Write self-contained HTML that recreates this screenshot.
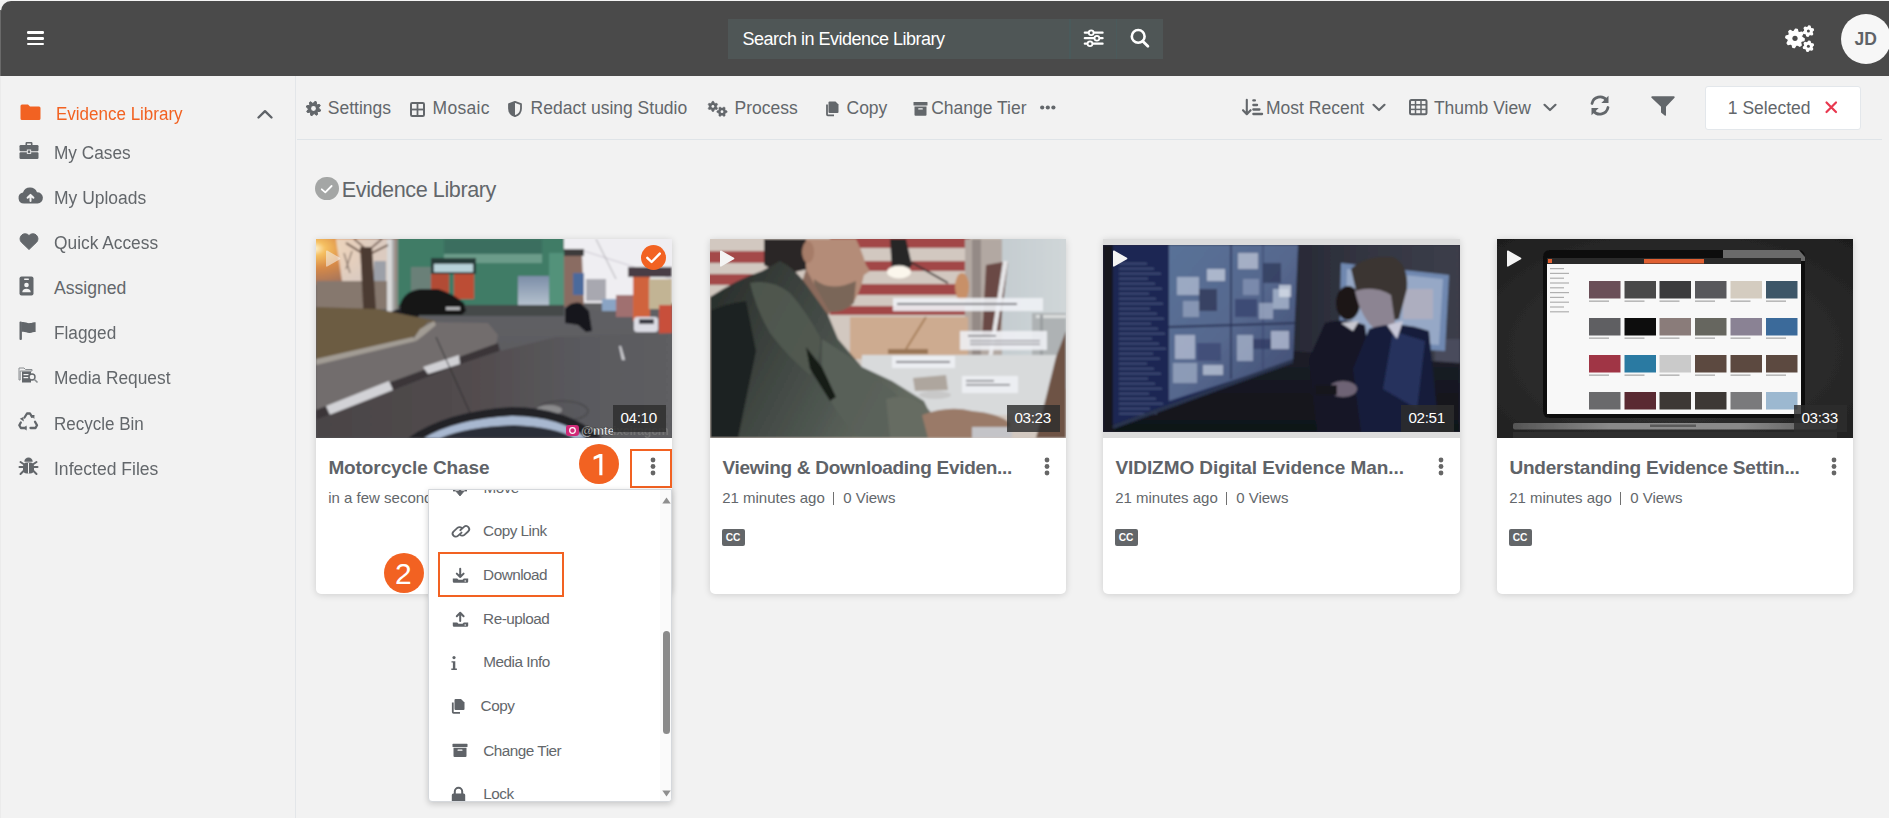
<!DOCTYPE html>
<html><head><meta charset="utf-8"><title>Evidence Library</title><style>
html,body{margin:0;padding:0;}
body{width:1889px;height:818px;position:relative;overflow:hidden;background:#f2f2f2;font-family:"Liberation Sans",sans-serif;}
.a{position:absolute;}
.t{position:absolute;white-space:nowrap;line-height:normal;}
svg.a{overflow:visible;}
</style></head><body>
<div class="a" style="left:0;top:0;width:1889px;height:1px;background:#f5f5f5"></div><div class="a" style="left:1px;top:1px;width:1888px;height:75px;background:#4a4a4a;border-top-left-radius:10px;"></div>
<div class="a" style="left:0px;top:10px;width:1px;height:66px;background:#6a6a6a;"></div>
<div class="a" style="left:27px;top:31.2px;width:17px;height:2.4px;background:#fff;border-radius:1.2px;"></div>
<div class="a" style="left:27px;top:37.199999999999996px;width:17px;height:2.4px;background:#fff;border-radius:1.2px;"></div>
<div class="a" style="left:27px;top:42.699999999999996px;width:17px;height:2.4px;background:#fff;border-radius:1.2px;"></div>
<div class="a" style="left:728px;top:19px;width:435px;height:40px;background:#4f5656;"></div>
<div class="a" style="left:1069px;top:19px;width:2px;height:40px;background:#4a5a5b;"></div>
<div class="a" style="left:1116px;top:19px;width:1px;height:40px;background:#4a5a5b;"></div>
<div class="t" style="left:742.50px;top:28.71px;font-size:18px;font-weight:normal;color:#ffffff;letter-spacing:-0.5px;">Search in Evidence Library</div>
<svg class="a" style="left:1080px;top:19px;" width="30" height="40" viewBox="0 0 30 40" ><line x1="4.7999999999999545" y1="13.700000000000003" x2="22.59999999999991" y2="13.700000000000003" stroke="#fff" stroke-width="2.2" stroke-linecap="round"/><circle cx="11.200000000000045" cy="13.700000000000003" r="2.4" fill="#4f5656" stroke="#fff" stroke-width="1.8"/><line x1="4.7999999999999545" y1="19.200000000000003" x2="22.59999999999991" y2="19.200000000000003" stroke="#fff" stroke-width="2.2" stroke-linecap="round"/><circle cx="16.90000000000009" cy="19.200000000000003" r="2.4" fill="#4f5656" stroke="#fff" stroke-width="1.8"/><line x1="4.7999999999999545" y1="24.700000000000003" x2="22.59999999999991" y2="24.700000000000003" stroke="#fff" stroke-width="2.2" stroke-linecap="round"/><circle cx="10.0" cy="24.700000000000003" r="2.4" fill="#4f5656" stroke="#fff" stroke-width="1.8"/></svg>
<svg class="a" style="left:1130px;top:29px;" width="22" height="22" viewBox="0 0 22 22" ><circle cx="8.2" cy="7.4" r="6.4" fill="none" stroke="#fff" stroke-width="2.6"/><line x1="12.8" y1="12.2" x2="17.9" y2="17.3" stroke="#fff" stroke-width="2.8" stroke-linecap="round"/></svg>
<svg class="a" style="left:1785px;top:25px;" width="30" height="28" viewBox="0 0 30 28" ><polygon points="10.46,4.01 12.26,4.28 12.99,6.97 14.17,7.68 16.89,7.05 17.98,8.52 16.59,10.94 16.92,12.27 19.29,13.76 19.02,15.56 16.33,16.29 15.62,17.47 16.25,20.19 14.78,21.28 12.36,19.89 11.03,20.22 9.54,22.59 7.74,22.32 7.01,19.63 5.83,18.92 3.11,19.55 2.02,18.08 3.41,15.66 3.08,14.33 0.71,12.84 0.98,11.04 3.67,10.31 4.38,9.13 3.75,6.41 5.22,5.32 7.64,6.71 8.97,6.38" fill="#fff" stroke="#fff" stroke-width="1.2" stroke-linejoin="round"/><circle cx="10" cy="13.3" r="2.6" fill="#4a4a4a"/><polygon points="23.74,0.91 25.07,1.18 25.51,2.94 26.26,3.59 28.06,3.80 28.50,5.09 27.19,6.35 27.00,7.32 27.72,8.99 26.83,10.01 25.08,9.51 24.14,9.83 23.06,11.29 21.73,11.02 21.29,9.26 20.54,8.61 18.74,8.40 18.30,7.11 19.61,5.85 19.80,4.88 19.08,3.21 19.97,2.19 21.72,2.69 22.66,2.37" fill="#fff" stroke="#fff" stroke-width="1.2" stroke-linejoin="round"/><circle cx="23.4" cy="6.1" r="1.5" fill="#4a4a4a"/><polygon points="23.74,16.01 25.07,16.28 25.51,18.04 26.26,18.69 28.06,18.90 28.50,20.19 27.19,21.45 27.00,22.42 27.72,24.09 26.83,25.11 25.08,24.61 24.14,24.93 23.06,26.39 21.73,26.12 21.29,24.36 20.54,23.71 18.74,23.50 18.30,22.21 19.61,20.95 19.80,19.98 19.08,18.31 19.97,17.29 21.72,17.79 22.66,17.47" fill="#fff" stroke="#fff" stroke-width="1.2" stroke-linejoin="round"/><circle cx="23.4" cy="21.2" r="1.5" fill="#4a4a4a"/></svg>
<div class="a" style="left:1841px;top:14px;width:50px;height:50px;background:#f7f7f7;border-radius:50%;"></div>
<div class="t" style="left:1854.50px;top:29.16px;font-size:17.5px;font-weight:bold;color:#5f6368;">JD</div>
<div class="a" style="left:295px;top:76px;width:1px;height:742px;background:#e3e6e9;"></div>
<div class="a" style="left:0px;top:76px;width:1px;height:742px;background:#ebebeb;"></div>
<div class="t" style="left:56.00px;top:104.07px;font-size:17.6px;font-weight:normal;color:#f26222;transform:scaleX(0.966);transform-origin:0 0;">Evidence Library</div>
<div class="t" style="left:54.00px;top:142.77px;font-size:17.6px;font-weight:normal;color:#63676b;transform:scaleX(0.98);transform-origin:0 0;">My Cases</div>
<div class="t" style="left:54.00px;top:187.77px;font-size:17.6px;font-weight:normal;color:#63676b;transform:scaleX(0.993);transform-origin:0 0;">My Uploads</div>
<div class="t" style="left:54.00px;top:233.07px;font-size:17.6px;font-weight:normal;color:#63676b;transform:scaleX(0.986);transform-origin:0 0;">Quick Access</div>
<div class="t" style="left:54.00px;top:278.07px;font-size:17.6px;font-weight:normal;color:#63676b;transform:scaleX(1.0);transform-origin:0 0;">Assigned</div>
<div class="t" style="left:54.00px;top:323.07px;font-size:17.6px;font-weight:normal;color:#63676b;transform:scaleX(0.979);transform-origin:0 0;">Flagged</div>
<div class="t" style="left:54.00px;top:368.07px;font-size:17.6px;font-weight:normal;color:#63676b;transform:scaleX(0.984);transform-origin:0 0;">Media Request</div>
<div class="t" style="left:54.00px;top:413.57px;font-size:17.6px;font-weight:normal;color:#63676b;transform:scaleX(0.967);transform-origin:0 0;">Recycle Bin</div>
<div class="t" style="left:54.00px;top:458.57px;font-size:17.6px;font-weight:normal;color:#63676b;transform:scaleX(0.997);transform-origin:0 0;">Infected Files</div>
<svg class="a" style="left:20px;top:103px;" width="21" height="18" viewBox="0 0 21 18" ><path d="M2 1.5h6l2 2h9a1.5 1.5 0 0 1 1.5 1.5v10.5a1.5 1.5 0 0 1-1.5 1.5H2A1.5 1.5 0 0 1 .5 15.5V3A1.5 1.5 0 0 1 2 1.5z" fill="#f26222"/></svg>
<svg class="a" style="left:256px;top:108px;" width="18" height="12" viewBox="0 0 18 12" ><polyline points="2.5,9.5 9,3.2 15.5,9.5" fill="none" stroke="#5f6368" stroke-width="2.4" stroke-linecap="round" stroke-linejoin="round"/></svg>
<svg class="a" style="left:18.5px;top:141px;" width="20" height="19" viewBox="0 0 20 19" ><path d="M6.5 4V2.2A1.2 1.2 0 0 1 7.7 1h4.6a1.2 1.2 0 0 1 1.2 1.2V4h-1.6V2.6H8.1V4z" fill="#63676b"/><rect x="0.5" y="4" width="19" height="6.2" rx="1.2" fill="#63676b"/><rect x="0.5" y="11.2" width="19" height="6.8" rx="1.2" fill="#63676b"/><rect x="8.3" y="9" width="3.4" height="3.4" fill="#63676b" stroke="#f2f2f2" stroke-width="0.9"/></svg>
<svg class="a" style="left:18px;top:187px;" width="25" height="17" viewBox="0 0 25 17" ><path d="M6 16.5A5.5 5.5 0 0 1 5 5.6 7.5 7.5 0 0 1 19 5.2 5.6 5.6 0 0 1 19.5 16.5z" fill="#63676b"/><path d="M12.5 14V8.2M9.6 10.8l2.9-2.9 2.9 2.9" stroke="#f2f2f2" stroke-width="2" fill="none" stroke-linecap="round" stroke-linejoin="round"/></svg>
<svg class="a" style="left:18.5px;top:232.5px;" width="20" height="17" viewBox="0 0 20 17" ><path d="M10 16.5L2.2 9A4.9 4.9 0 0 1 10 2.6 4.9 4.9 0 0 1 17.8 9z" fill="#63676b" stroke="#63676b" stroke-width="1" stroke-linejoin="round"/></svg>
<svg class="a" style="left:18.5px;top:275.5px;" width="15" height="20" viewBox="0 0 15 20" ><rect x="0.5" y="0.5" width="14" height="19" rx="2" fill="#63676b"/><rect x="5" y="2.5" width="5" height="1.4" rx=".7" fill="#f2f2f2"/><circle cx="7.5" cy="9" r="2.3" fill="#f2f2f2"/><path d="M3.3 16.3a4.2 3.6 0 0 1 8.4 0z" fill="#f2f2f2"/></svg>
<svg class="a" style="left:18.5px;top:321px;" width="18" height="19" viewBox="0 0 18 19" ><rect x="0.5" y="0.5" width="2.4" height="18.5" rx="1" fill="#63676b"/><path d="M2.5 1.3c3-1 5.5 1.2 8.5.8 2-.2 3.6-.9 5.6-.9V11c-2 0-3.6.7-5.6.9-3 .4-5.5-1.8-8.5-.8z" fill="#63676b"/></svg>
<svg class="a" style="left:18px;top:365px;" width="21" height="20" viewBox="0 0 21 20" ><path d="M1 3h5l1.5 1.5H14V6H2.2v9H1z" fill="none" stroke="#8a8e91" stroke-width="1"/><rect x="4" y="6.5" width="9" height="11" fill="#63676b"/><rect x="5.5" y="9" width="5" height="1.2" fill="#f2f2f2"/><rect x="5.5" y="12" width="5" height="1.2" fill="#f2f2f2"/><circle cx="14" cy="12" r="3" fill="#f2f2f2" stroke="#63676b" stroke-width="1.4"/><line x1="16.2" y1="14.2" x2="19.5" y2="17.5" stroke="#8a8e91" stroke-width="1.6"/></svg>
<svg class="a" style="left:18px;top:411px;" width="21" height="20" viewBox="0 0 21 20" ><g fill="none" stroke="#63676b" stroke-width="2.3" stroke-linecap="round" stroke-linejoin="round"><path d="M6.5 6.5L9 2.5h3l2 3.3"/><path d="M2.8 11.5l-1.5 2.7 1.6 2.8h4.5"/><path d="M12.5 17h5l1.5-2.7-2-3.6"/></g><g fill="#63676b"><path d="M12.8 4l3.7 0-.2 4z"/><path d="M8.6 14.5v5l-3.4-2.5z"/><path d="M1.8 7.8l3.5-1.8.5 4.4z"/></g></svg>
<svg class="a" style="left:18px;top:456px;" width="21" height="20" viewBox="0 0 21 20" ><g fill="#63676b"><path d="M6.3 5.8a4.2 4.2 0 0 1 8.4 0z"/><rect x="5" y="6.6" width="11" height="11" rx="4"/></g><g stroke="#63676b" stroke-width="2" stroke-linecap="round"><line x1="1.5" y1="11" x2="19.5" y2="11"/><line x1="2.5" y1="6" x2="5.5" y2="8"/><line x1="18.5" y1="6" x2="15.5" y2="8"/><line x1="2.5" y1="18" x2="5.5" y2="15"/><line x1="18.5" y1="18" x2="15.5" y2="15"/></g><line x1="10.5" y1="7" x2="10.5" y2="17.5" stroke="#f2f2f2" stroke-width="1"/></svg>
<div class="a" style="left:297px;top:139px;width:1585px;height:1px;background:#dfe4e8;"></div>
<div class="t" style="left:327.80px;top:97.66px;font-size:17.5px;font-weight:normal;color:#63676b;">Settings</div>
<div class="t" style="left:432.60px;top:97.66px;font-size:17.5px;font-weight:normal;color:#63676b;letter-spacing:0.3px;">Mosaic</div>
<div class="t" style="left:530.60px;top:97.66px;font-size:17.5px;font-weight:normal;color:#63676b;">Redact using Studio</div>
<div class="t" style="left:734.50px;top:97.66px;font-size:17.5px;font-weight:normal;color:#63676b;">Process</div>
<div class="t" style="left:846.50px;top:97.66px;font-size:17.5px;font-weight:normal;color:#63676b;">Copy</div>
<div class="t" style="left:931.20px;top:97.66px;font-size:17.5px;font-weight:normal;color:#63676b;">Change Tier</div>
<svg class="a" style="left:305.5px;top:101px;" width="15" height="15" viewBox="0 0 15 15" ><polygon points="8.92,0.34 10.29,0.76 10.50,3.01 11.32,3.68 13.57,3.44 14.24,4.71 12.80,6.45 12.90,7.50 14.66,8.92 14.24,10.29 11.99,10.50 11.32,11.32 11.56,13.57 10.29,14.24 8.55,12.80 7.50,12.90 6.08,14.66 4.71,14.24 4.50,11.99 3.68,11.32 1.43,11.56 0.76,10.29 2.20,8.55 2.10,7.50 0.34,6.08 0.76,4.71 3.01,4.50 3.68,3.68 3.44,1.43 4.71,0.76 6.45,2.20 7.50,2.10" fill="#63676b" stroke="#63676b" stroke-width="1" stroke-linejoin="round"/><circle cx="7.5" cy="7.5" r="2.4" fill="#f2f2f2"/></svg>
<svg class="a" style="left:410px;top:101.5px;" width="15" height="15" viewBox="0 0 15 15" ><rect x="1" y="1" width="13" height="13" rx="1.2" fill="none" stroke="#63676b" stroke-width="2"/><line x1="7.5" y1="1" x2="7.5" y2="14" stroke="#63676b" stroke-width="1.8"/><line x1="1" y1="7.5" x2="14" y2="7.5" stroke="#63676b" stroke-width="1.8"/></svg>
<svg class="a" style="left:508px;top:100.5px;" width="14" height="16" viewBox="0 0 14 16" ><path d="M7 .8L1 3.2v4.2c0 3.8 2.6 6.6 6 7.8 3.4-1.2 6-4 6-7.8V3.2z" fill="none" stroke="#63676b" stroke-width="1.8" stroke-linejoin="round"/><path d="M7 .8v14.4c-3.4-1.2-6-4-6-7.8V3.2z" fill="#63676b"/></svg>
<svg class="a" style="left:708px;top:99.5px;" width="20" height="19" viewBox="0 0 20 19" ><polygon points="4.23,1.34 5.57,1.34 6.32,2.98 7.15,3.46 8.95,3.30 9.61,4.45 8.57,5.92 8.57,6.88 9.61,8.35 8.95,9.50 7.15,9.34 6.32,9.82 5.57,11.46 4.23,11.46 3.48,9.82 2.65,9.34 0.85,9.50 0.19,8.35 1.23,6.88 1.23,5.92 0.19,4.45 0.85,3.30 2.65,3.46 3.48,2.98" fill="#63676b" stroke="#63676b" stroke-width="0.6" stroke-linejoin="round"/><circle cx="4.9" cy="6.4" r="1.4" fill="#f2f2f2"/><polygon points="15.95,6.99 17.10,7.65 16.94,9.45 17.42,10.28 19.06,11.03 19.06,12.37 17.42,13.12 16.94,13.95 17.10,15.75 15.95,16.41 14.48,15.37 13.52,15.37 12.05,16.41 10.90,15.75 11.06,13.95 10.58,13.12 8.94,12.37 8.94,11.03 10.58,10.28 11.06,9.45 10.90,7.65 12.05,6.99 13.52,8.03 14.48,8.03" fill="#63676b" stroke="#63676b" stroke-width="0.6" stroke-linejoin="round"/><circle cx="14" cy="11.7" r="1.4" fill="#f2f2f2"/></svg>
<svg class="a" style="left:825px;top:100px;" width="15" height="17" viewBox="0 0 15 17" ><path d="M4.5 1.5h6l3 3V12a1 1 0 0 1-1 1h-8a1 1 0 0 1-1-1V2.5a1 1 0 0 1 1-1z" fill="#63676b"/><path d="M2 4.5v10a.8.8 0 0 0 .8.8H9" fill="none" stroke="#63676b" stroke-width="1.8"/></svg>
<svg class="a" style="left:913px;top:100.5px;" width="15" height="16" viewBox="0 0 15 16" ><rect x="0.5" y="1" width="14" height="3.6" rx=".6" fill="#63676b"/><path d="M1.5 5.6h12v8.2a1 1 0 0 1-1 1h-10a1 1 0 0 1-1-1z" fill="#63676b"/><rect x="5.2" y="7.2" width="4.6" height="1.3" rx=".5" fill="#f2f2f2"/></svg>
<svg class="a" style="left:1039.5px;top:104.5px;" width="16" height="5" viewBox="0 0 16 5" ><circle cx="2.2" cy="2.5" r="2.1" fill="#63676b"/><circle cx="7.8" cy="2.5" r="2.1" fill="#63676b"/><circle cx="13.4" cy="2.5" r="2.1" fill="#63676b"/></svg>
<svg class="a" style="left:1242px;top:99px;" width="22" height="17" viewBox="0 0 22 17" ><path d="M4.8 0.8v14M1 11.2l3.8 4 3.8-4" fill="none" stroke="#63676b" stroke-width="2.1" stroke-linecap="round" stroke-linejoin="round"/><rect x="10.2" y="0.25" width="3.8" height="2.3" rx="1.1" fill="#63676b"/><rect x="10.2" y="4.85" width="6.0" height="2.3" rx="1.1" fill="#63676b"/><rect x="10.2" y="9.35" width="8.4" height="2.3" rx="1.1" fill="#63676b"/><rect x="10.2" y="13.85" width="11.0" height="2.3" rx="1.1" fill="#63676b"/></svg>
<div class="t" style="left:1266.00px;top:97.66px;font-size:17.5px;font-weight:normal;color:#63676b;">Most Recent</div>
<svg class="a" style="left:1371.5px;top:102.5px;" width="14" height="9" viewBox="0 0 14 9" ><polyline points="1.5,1.8 7,7 12.5,1.8" fill="none" stroke="#63676b" stroke-width="2.2" stroke-linecap="round" stroke-linejoin="round"/></svg>
<svg class="a" style="left:1408.5px;top:99.2px;" width="19" height="16.5" viewBox="0 0 19 16.5" ><rect x="1" y="1" width="16.5" height="14.2" rx="1.5" fill="none" stroke="#63676b" stroke-width="2"/><line x1="6.5" y1="1" x2="6.5" y2="15" stroke="#63676b" stroke-width="1.5"/><line x1="12" y1="1" x2="12" y2="15" stroke="#63676b" stroke-width="1.5"/><line x1="1" y1="5.8" x2="17.5" y2="5.8" stroke="#63676b" stroke-width="1.5"/><line x1="1" y1="10.4" x2="17.5" y2="10.4" stroke="#63676b" stroke-width="1.5"/></svg>
<div class="t" style="left:1433.90px;top:97.66px;font-size:17.5px;font-weight:normal;color:#63676b;">Thumb View</div>
<svg class="a" style="left:1543px;top:102.5px;" width="14" height="9" viewBox="0 0 14 9" ><polyline points="1.5,1.8 7,7 12.5,1.8" fill="none" stroke="#63676b" stroke-width="2.2" stroke-linecap="round" stroke-linejoin="round"/></svg>
<svg class="a" style="left:1589px;top:95px;" width="22" height="21" viewBox="0 0 22 21" ><path d="M3 8.5A8.3 8.3 0 0 1 17.6 5" fill="none" stroke="#63676b" stroke-width="2.8" stroke-linecap="round"/><path d="M19.5 .8v7.2h-7.2z" fill="#63676b"/><path d="M19 12.5A8.3 8.3 0 0 1 4.4 16" fill="none" stroke="#63676b" stroke-width="2.8" stroke-linecap="round"/><path d="M2.5 20.2v-7.2h7.2z" fill="#63676b"/></svg>
<svg class="a" style="left:1650.5px;top:94.5px;" width="24" height="22" viewBox="0 0 24 22" ><path d="M1.2 1.2h21.6a.9.9 0 0 1 .7 1.5L15 11.8v8.2a.8.8 0 0 1-1.3.6l-3.4-2.8a.8.8 0 0 1-.3-.6v-5.4L.5 2.7a.9.9 0 0 1 .7-1.5z" fill="#63676b"/></svg>
<div class="a" style="left:1705px;top:85.5px;width:154px;height:42px;background:#fff;border:1px solid #e3e7eb;border-radius:3px;"></div>
<div class="t" style="left:1727.80px;top:98.36px;font-size:17.5px;font-weight:normal;color:#63676b;">1 Selected</div>
<svg class="a" style="left:1824.5px;top:101px;" width="13" height="13" viewBox="0 0 13 13" ><path d="M1.5 1.5l9.5 9.5M11 1.5l-9.5 9.5" stroke="#e8384f" stroke-width="2.2" stroke-linecap="round"/></svg>
<div class="a" style="left:315.3px;top:176.6px;width:23.5px;height:23.5px;background:#a4a6a5;border-radius:50%;"></div>
<svg class="a" style="left:315.3px;top:176.6px;" width="24" height="24" viewBox="0 0 24 24" ><polyline points="6.8,12.3 10.3,15.4 16.6,9" fill="none" stroke="#fff" stroke-width="1.8" stroke-linecap="round" stroke-linejoin="round"/></svg>
<div class="t" style="left:341.80px;top:177.25px;font-size:21.6px;font-weight:normal;color:#63676b;letter-spacing:-0.42px;">Evidence Library</div>
<div class="a" style="left:316px;top:239px;width:356px;height:355px;background:#fff;border-radius:0 0 5px 5px;box-shadow:0 1px 7px rgba(0,0,0,.15);"></div>
<div class="a" style="left:316px;top:239px;width:356px;height:199px;overflow:hidden;"><svg width="356" height="199" viewBox="0 0 356 199" style="display:block"><defs><filter id="f1" x="-10%" y="-10%" width="120%" height="120%"><feGaussianBlur stdDeviation="1.0"/></filter></defs><rect width="356" height="199" fill="#5a5a5e"/><g filter="url(#f1)"><defs><radialGradient id="sun" cx="0.04" cy="0.3" r="0.75"><stop offset="0" stop-color="#fffbe0"/><stop offset="0.18" stop-color="#f6c060"/><stop offset="0.5" stop-color="#d88a48"/><stop offset="1" stop-color="#9a7060"/></radialGradient><linearGradient id="road1" x1="0" y1="0" x2="0" y2="1"><stop offset="0" stop-color="#66666a"/><stop offset="1" stop-color="#55555a"/></linearGradient><linearGradient id="rl1" x1="0" y1="0" x2="1" y2="0"><stop offset="0" stop-color="#4a4446"/><stop offset="0.45" stop-color="#524c4e"/><stop offset="0.75" stop-color="#5a5a5e"/><stop offset="1" stop-color="#5e5e62"/></linearGradient><linearGradient id="shut1" x1="0" y1="0" x2="0" y2="1"><stop offset="0" stop-color="#7c8ea8"/><stop offset="1" stop-color="#b8c4d0"/></linearGradient></defs><rect x="-10" y="-10" width="376" height="219" fill="url(#road1)"/><rect x="246" y="-6" width="120" height="70" fill="#efeef2"/><line x1="268" y1="12" x2="356" y2="40" stroke="#b0aab8" stroke-width="0.6"/><line x1="280" y1="0" x2="300" y2="40" stroke="#9a9aa0" stroke-width="0.8"/><rect x="270" y="40" width="20" height="22" fill="#a8a8b0"/><rect x="312" y="28" width="44" height="10" fill="#4a3c44"/><rect x="317" y="38" width="17" height="44" fill="#d0643e"/><rect x="333" y="40" width="23" height="30" fill="#c2b494"/><rect x="343" y="66" width="13" height="30" fill="#c8503a"/><rect x="300" y="56" width="17" height="22" fill="#a07070"/><rect x="286" y="60" width="14" height="12" fill="#8aa4c4"/><polygon points="246,10 266,16 268,66 246,68" fill="#8a6c62"/><rect x="246" y="10" width="22" height="7" fill="#3e3a3a"/><rect x="257" y="34" width="11" height="22" fill="#4c6a9c"/><rect x="82" y="-6" width="166" height="82" fill="#3f7b66"/><rect x="95" y="28" width="20" height="24" fill="#6a8078"/><rect x="128" y="0" width="98" height="15" fill="#3a6e5e"/><rect x="128" y="15" width="98" height="9" fill="#6c9c8a"/><rect x="233" y="14" width="15" height="62" fill="#52927a"/><rect x="115" y="19" width="45" height="16" fill="#273a38"/><rect x="118" y="25" width="39" height="8" fill="#b8d2d8"/><rect x="115" y="35" width="18" height="25" fill="#b24c36"/><rect x="138" y="35" width="20" height="25" fill="#bc4e36"/><rect x="202" y="37" width="31" height="31" fill="url(#shut1)"/><rect x="82" y="66" width="166" height="11" fill="#45484a"/><rect x="-6" y="-6" width="88" height="52" fill="url(#sun)"/><polygon points="20,0 72,0 72,42 26,42" fill="#ece2d8" opacity="0.8"/><line x1="28" y1="14" x2="34" y2="34" stroke="#5a4a40" stroke-width="1"/><line x1="36" y1="12" x2="30" y2="30" stroke="#5a4a40" stroke-width="1"/><rect x="58" y="22" width="12" height="20" fill="#9ca0a8"/><rect x="0" y="42" width="82" height="28" fill="#86786e"/><rect x="71" y="0" width="8" height="73" fill="#d8d8d8"/><rect x="76" y="0" width="3" height="73" fill="#a8a8a8"/><rect x="80" y="0" width="2" height="70" fill="#8a9088"/><polygon points="44,8 56,8 61,86 48,86" fill="#4b3a30"/><g stroke="#5a4236" stroke-width="1.6" fill="none"><path d="M50 10 L38 0"/><path d="M54 10 L66 0"/><path d="M46 14 L30 4"/><path d="M56 14 L72 6"/></g><ellipse cx="88" cy="76" rx="15" ry="6" fill="#1c1c20"/><polygon points="0,68 62,70 120,82 96,99 0,121" fill="#6c5b42"/><polygon points="0,123 98,99 112,83 172,84 182,96 180,106 146,117 75,143 0,171" fill="#726d6d"/><polygon points="0,120 97,98 100,102 0,126" fill="#a29c94"/><polygon points="98,99 104,90 118,82 120,86 108,96 100,102" fill="#a29c94"/><polygon points="0,171 75,143 146,117 182,104 184,112 148,124 78,151 0,181" fill="#3a3638"/><polygon points="10,167 73,142 77,151 14,176" fill="#d2d2d6"/><polygon points="107,128 143,116 144,125 112,135" fill="#d0d0d4"/><polygon points="0,181 78,151 148,124 184,112 240,98 356,94 356,199 0,199" fill="url(#rl1)"/><polygon points="303,107 305,107 309,121 306,121" fill="#d0d0d4"/><polygon points="324,79 325,79 327,86 326,86" fill="#c8c8cc"/><line x1="120" y1="98" x2="155" y2="176" stroke="#262628" stroke-width="0.9"/><path d="M84 66 Q88 52 104 50 L122 50 Q136 54 148 64 L150 72 L146 76 L92 76 Q84 74 84 66z" fill="#141418"/><rect x="130" y="68" width="14" height="3" fill="#b0b0b4"/><path d="M249 70 Q255 62 265 64 L273 72 L276 92 L270 93 L262 86 L249 84z" fill="#18181c"/><rect x="318" y="78" width="24" height="15" rx="3" fill="#dcdce4"/><rect x="323" y="80" width="15" height="5" fill="#3a3a44"/><ellipse cx="246" cy="172" rx="26" ry="10" fill="none" stroke="#48484c" stroke-width="1.5"/><ellipse cx="233" cy="171" rx="13" ry="5" fill="#8a8a8c"/><path d="M92 199 Q130 172 196 168 Q252 168 286 199z" fill="#202228"/><path d="M108 199 Q140 180 196 177 Q246 178 270 199z" fill="#a8b8d0"/><path d="M124 199 Q150 188 198 186 Q240 188 258 199z" fill="#2a2e38"/></g><rect x="250" y="186" width="13" height="11" rx="3" fill="#d02a78"/><circle cx="256.5" cy="191.5" r="2.8" fill="none" stroke="#fff" stroke-width="1.2"/><text x="265" y="196" font-family="Liberation Sans" font-weight="bold" font-size="12.5" fill="#f6f6f6" stroke="#1a1a1a" stroke-width="0.4" letter-spacing="-0.3">@mte</text><text x="297" y="196" font-family="Liberation Sans" font-weight="bold" font-size="12.5" fill="#7a7a7a" opacity="0.8" letter-spacing="-0.3">ixeiragcm</text></svg></div>
<div class="a" style="left:613px;top:405px;width:53px;height:26.5px;background:rgba(45,45,45,.82);"></div>
<div class="t" style="left:620.50px;top:409.34px;font-size:15.2px;font-weight:normal;color:#fff;letter-spacing:-0.35px;">04:10</div>
<svg class="a" style="left:325px;top:250px;" width="16" height="17" viewBox="0 0 16 17" ><path d="M1.8 1.2L14.5 8.5 1.8 15.8z" fill="#f4f4f4" stroke="#f4f4f4" stroke-width="1.6" stroke-linejoin="round" opacity="0.55"/></svg>
<div class="t" style="left:328.40px;top:456.81px;font-size:19px;font-weight:bold;color:#5f6368;letter-spacing:-0.1px;">Motorcycle Chase</div>
<svg class="a" style="left:650px;top:457px;" width="6" height="19" viewBox="0 0 6 19" ><circle cx="3" cy="3.0" r="2.4" fill="#666"/><circle cx="3" cy="9.5" r="2.4" fill="#666"/><circle cx="3" cy="16.0" r="2.4" fill="#666"/></svg>
<div class="t" style="left:328.20px;top:489.03px;font-size:15px;font-weight:normal;color:#63676b;">in a few seconds</div>
<div class="a" style="left:710px;top:239px;width:356px;height:355px;background:#fff;border-radius:0 0 5px 5px;box-shadow:0 1px 7px rgba(0,0,0,.15);"></div>
<div class="a" style="left:710px;top:239px;width:356px;height:199px;overflow:hidden;"><svg width="356" height="199" viewBox="0 0 356 199" style="display:block"><defs><filter id="f2" x="-10%" y="-10%" width="120%" height="120%"><feGaussianBlur stdDeviation="1.0"/></filter></defs><rect width="356" height="199" fill="#8a8880"/><g filter="url(#f2)"><defs><linearGradient id="wall2" x1="0" y1="0" x2="1" y2="0"><stop offset="0" stop-color="#c4ccd0"/><stop offset="1" stop-color="#d2d8da"/></linearGradient><linearGradient id="jk2" x1="0" y1="0" x2="1" y2="0.4"><stop offset="0" stop-color="#262b28"/><stop offset="0.35" stop-color="#3a403c"/><stop offset="0.7" stop-color="#4e5650"/><stop offset="1" stop-color="#646a60"/></linearGradient></defs><rect x="-10" y="-10" width="376" height="219" fill="#d2c8c0"/><rect x="-6" y="12" width="80" height="12" fill="#a44a4a"/><rect x="-6" y="35" width="80" height="11" fill="#a44a4a"/><rect x="120" y="-2" width="140" height="11" fill="#a24646"/><rect x="120" y="22" width="140" height="10" fill="#a24646"/><rect x="120" y="45" width="140" height="11" fill="#a24646"/><rect x="120" y="67" width="140" height="9" fill="#a24646"/><rect x="290" y="-6" width="76" height="156" fill="url(#wall2)"/><rect x="255" y="0" width="37" height="125" fill="#b2a8a2"/><rect x="262" y="0" width="9" height="125" fill="#948a86"/><polygon points="276,26 298,22 290,92 272,98" fill="#6a4a44"/><polygon points="293,22 298,22 282,120 278,120" fill="#e6e6e8"/><rect x="322" y="74" width="34" height="50" fill="#aeb2b4"/><rect x="326" y="76" width="30" height="3" fill="#dcdede"/><rect x="330" y="76" width="3" height="48" fill="#9a9ea0"/><rect x="140" y="78" width="118" height="42" fill="#cdab90"/><polygon points="180,0 196,0 202,26 196,34 182,34" fill="#262628"/><ellipse cx="189" cy="33" rx="12" ry="6.5" fill="#fbf6ec"/><line x1="199" y1="22" x2="238" y2="44" stroke="#3a3230" stroke-width="2"/><ellipse cx="252" cy="48" rx="7" ry="14" fill="#c89068"/><line x1="216" y1="78" x2="196" y2="110" stroke="#a07850" stroke-width="1.6"/><rect x="178" y="110" width="40" height="5" fill="#9a7656"/><polygon points="152,116 356,116 356,176 220,176 150,152" fill="#d8dadb"/><polygon points="203,139 236,136 238,151 205,152" fill="#aea69e"/><ellipse cx="225" cy="156" rx="16" ry="4" fill="#c8c8c8"/><path d="M54 0 L104 0 L98 30 L72 36 L54 26z" fill="#2c2826"/><path d="M96 0 L146 0 Q152 12 156 26 L160 32 L154 36 Q150 56 140 68 L120 72 Q104 64 100 44 L96 28z" fill="#b48c78"/><path d="M104 40 Q120 54 146 42 L144 64 Q132 76 114 72 Q104 60 104 40z" fill="#7a6658"/><ellipse cx="98" cy="13" rx="6" ry="11" fill="#a67c68"/><path d="M96 30 L120 74 L110 84 L90 50z" fill="#8a6a5c"/><path d="M0 58 Q28 40 52 32 L70 22 Q86 30 98 48 L118 76 L128 100 L152 128 L182 142 L214 162 L232 199 L0 199z" fill="url(#jk2)"/><path d="M40 44 Q62 40 80 54 Q96 72 110 98 Q112 118 100 136 Q78 118 60 94 Q46 70 40 44z" fill="#545c52" opacity="0.85"/><path d="M112 100 L140 118 Q160 138 180 150 L204 172 L214 199 L150 199 Q120 170 112 140z" fill="#5a625a" opacity="0.9"/><path d="M0 72 Q18 64 36 62 L46 112 L28 199 L0 199z" fill="#1e2420"/><path d="M96 108 L112 128 L126 158 L120 162 L100 130z" fill="#181c18"/><path d="M176 160 Q200 152 220 172 L226 199 L180 199z" fill="#666c62"/><path d="M212 176 Q238 166 262 172 Q288 174 300 184 L300 199 L218 199z" fill="#9a7a68"/><rect x="262" y="188" width="40" height="11" fill="#c4c4c8"/><polygon points="346,118 356,92 356,199 326,199" fill="#6e5244"/><rect x="183" y="59" width="150" height="13" fill="#eef0f4" opacity="0.92"/><rect x="187" y="64" width="120" height="2" fill="#74747a"/><rect x="250" y="92" width="87" height="19" fill="#eef0f4" opacity="0.9"/><rect x="258" y="96" width="28" height="1.5" fill="#707076"/><rect x="260" y="101" width="70" height="1.5" fill="#9a9aa0"/><rect x="260" y="104.5" width="70" height="1.5" fill="#9a9aa0"/><rect x="182" y="117" width="63" height="12" fill="#eef0f4" opacity="0.92"/><rect x="186" y="122" width="54" height="1.8" fill="#74747a"/><rect x="252" y="137" width="56" height="17" fill="#eef0f4" opacity="0.92"/><rect x="256" y="141" width="28" height="1.5" fill="#74747a"/><rect x="256" y="145" width="44" height="1.5" fill="#74747a"/></g></svg></div>
<div class="a" style="left:1007px;top:405px;width:53px;height:26.5px;background:rgba(45,45,45,.82);"></div>
<div class="t" style="left:1014.50px;top:409.34px;font-size:15.2px;font-weight:normal;color:#fff;letter-spacing:-0.35px;">03:23</div>
<svg class="a" style="left:719px;top:250px;" width="16" height="17" viewBox="0 0 16 17" ><path d="M1.8 1.2L14.5 8.5 1.8 15.8z" fill="#f4f4f4" stroke="#f4f4f4" stroke-width="1.6" stroke-linejoin="round" opacity="1"/></svg>
<div class="t" style="left:722.40px;top:456.81px;font-size:19px;font-weight:bold;color:#5f6368;letter-spacing:-0.28px;">Viewing &amp; Downloading Eviden...</div>
<svg class="a" style="left:1044px;top:457px;" width="6" height="19" viewBox="0 0 6 19" ><circle cx="3" cy="3.0" r="2.4" fill="#666"/><circle cx="3" cy="9.5" r="2.4" fill="#666"/><circle cx="3" cy="16.0" r="2.4" fill="#666"/></svg>
<div class="t" style="left:722.20px;top:489.03px;font-size:15px;font-weight:normal;color:#63676b;">21 minutes ago</div>
<div class="a" style="left:833.3px;top:492px;width:1.1px;height:13px;background:#707070;"></div>
<div class="t" style="left:843.20px;top:489.03px;font-size:15px;font-weight:normal;color:#63676b;">0 Views</div>
<div class="a" style="left:722px;top:529px;width:22.5px;height:17px;background:#636669;border-radius:2px;"></div>
<div class="t" style="left:725.80px;top:532.37px;font-size:10.2px;font-weight:bold;color:#fff;letter-spacing:-0.1px;">CC</div>
<div class="a" style="left:1103px;top:239px;width:357px;height:355px;background:#fff;border-radius:0 0 5px 5px;box-shadow:0 1px 7px rgba(0,0,0,.15);"></div>
<div class="a" style="left:1103px;top:239px;width:357px;height:199px;overflow:hidden;"><svg width="357" height="199" viewBox="0 0 357 199" style="display:block"><defs><filter id="f3" x="-10%" y="-10%" width="120%" height="120%"><feGaussianBlur stdDeviation="1.0"/></filter></defs><rect width="357" height="199" fill="#2a2c3a"/><g filter="url(#f3)"><rect x="-10" y="-10" width="377" height="219" fill="#2a2c3a"/><rect x="0" y="6" width="357" height="187" fill="#2a2c3a"/><defs><linearGradient id="scr3" x1="0" y1="0" x2="1" y2="1"><stop offset="0" stop-color="#5a7298"/><stop offset="0.5" stop-color="#56688e"/><stop offset="1" stop-color="#3e4a70"/></linearGradient><linearGradient id="flr3" x1="0" y1="0" x2="0" y2="1"><stop offset="0" stop-color="#1c1e28"/><stop offset="1" stop-color="#101218"/></linearGradient><linearGradient id="wall3" x1="0" y1="0" x2="1" y2="0"><stop offset="0" stop-color="#262834"/><stop offset="0.5" stop-color="#343642"/><stop offset="1" stop-color="#3c3e4a"/></linearGradient></defs><rect x="180" y="6" width="177" height="187" fill="url(#wall3)"/><rect x="332" y="100" width="25" height="93" fill="#4a4c5c"/><polygon points="0,193 0,160 190,112 357,124 357,193" fill="url(#flr3)"/><rect x="0" y="6" width="10" height="187" fill="#14141c"/><polygon points="10,6 195,6 190,122 10,186" fill="#1e2852"/><polygon points="66,6 195,6 190,122 66,162" fill="url(#scr3)"/><line x1="128" y1="6" x2="128" y2="140" stroke="#2a3458" stroke-width="1.5"/><line x1="66" y1="88" x2="192" y2="84" stroke="#2a3458" stroke-width="2"/><line x1="160" y1="6" x2="160" y2="130" stroke="#34406a" stroke-width="1"/><rect x="74" y="38" width="22" height="18" fill="#b8c2d6" opacity="0.7"/><rect x="96" y="50" width="18" height="22" fill="#2a3050" opacity="0.7"/><rect x="80" y="62" width="16" height="16" fill="#9aa6c2" opacity="0.7"/><rect x="104" y="30" width="18" height="12" fill="#cfd6e4" opacity="0.7"/><rect x="135" y="14" width="20" height="16" fill="#c4ccdc" opacity="0.7"/><rect x="160" y="24" width="18" height="20" fill="#2c3456" opacity="0.7"/><rect x="140" y="40" width="16" height="16" fill="#8a98b8" opacity="0.7"/><rect x="170" y="50" width="16" height="20" fill="#b8c4d8" opacity="0.7"/><rect x="132" y="60" width="22" height="18" fill="#34406a" opacity="0.7"/><rect x="156" y="64" width="14" height="16" fill="#a8b4cc" opacity="0.7"/><rect x="72" y="96" width="20" height="24" fill="#c0c8da" opacity="0.7"/><rect x="94" y="104" width="24" height="18" fill="#3a4670" opacity="0.7"/><rect x="70" y="124" width="24" height="20" fill="#a4b0c8" opacity="0.7"/><rect x="100" y="126" width="20" height="10" fill="#c8d0e0" opacity="0.7"/><rect x="134" y="96" width="16" height="26" fill="#b0bcd2" opacity="0.7"/><rect x="150" y="100" width="18" height="10" fill="#2e3860" opacity="0.7"/><rect x="168" y="92" width="18" height="18" fill="#c4cce0" opacity="0.7"/><rect x="176" y="46" width="12" height="12" fill="#dde2ec" opacity="0.7"/><rect x="16" y="24" width="28" height="1.3" fill="#8a9ac8" opacity="0.4"/><rect x="16" y="29" width="35" height="1.3" fill="#8a9ac8" opacity="0.4"/><rect x="16" y="34" width="42" height="1.3" fill="#8a9ac8" opacity="0.4"/><rect x="16" y="39" width="29" height="1.3" fill="#8a9ac8" opacity="0.4"/><rect x="16" y="44" width="36" height="1.3" fill="#8a9ac8" opacity="0.4"/><rect x="16" y="49" width="43" height="1.3" fill="#8a9ac8" opacity="0.4"/><rect x="16" y="54" width="30" height="1.3" fill="#8a9ac8" opacity="0.4"/><rect x="16" y="59" width="37" height="1.3" fill="#8a9ac8" opacity="0.4"/><rect x="16" y="64" width="44" height="1.3" fill="#8a9ac8" opacity="0.4"/><rect x="16" y="69" width="31" height="1.3" fill="#8a9ac8" opacity="0.4"/><rect x="16" y="74" width="38" height="1.3" fill="#8a9ac8" opacity="0.4"/><rect x="16" y="79" width="45" height="1.3" fill="#8a9ac8" opacity="0.4"/><rect x="16" y="84" width="32" height="1.3" fill="#8a9ac8" opacity="0.4"/><rect x="16" y="89" width="39" height="1.3" fill="#8a9ac8" opacity="0.4"/><rect x="16" y="94" width="46" height="1.3" fill="#8a9ac8" opacity="0.4"/><rect x="16" y="99" width="33" height="1.3" fill="#8a9ac8" opacity="0.4"/><rect x="16" y="104" width="40" height="1.3" fill="#8a9ac8" opacity="0.4"/><rect x="16" y="109" width="47" height="1.3" fill="#8a9ac8" opacity="0.4"/><rect x="16" y="114" width="34" height="1.3" fill="#8a9ac8" opacity="0.4"/><rect x="16" y="119" width="41" height="1.3" fill="#8a9ac8" opacity="0.4"/><rect x="16" y="124" width="28" height="1.3" fill="#8a9ac8" opacity="0.4"/><rect x="16" y="129" width="35" height="1.3" fill="#8a9ac8" opacity="0.4"/><rect x="16" y="134" width="42" height="1.3" fill="#8a9ac8" opacity="0.4"/><rect x="16" y="139" width="29" height="1.3" fill="#8a9ac8" opacity="0.4"/><rect x="16" y="144" width="36" height="1.3" fill="#8a9ac8" opacity="0.4"/><rect x="16" y="149" width="43" height="1.3" fill="#8a9ac8" opacity="0.4"/><rect x="16" y="154" width="30" height="1.3" fill="#8a9ac8" opacity="0.4"/><rect x="16" y="159" width="37" height="1.3" fill="#8a9ac8" opacity="0.4"/><rect x="16" y="164" width="44" height="1.3" fill="#8a9ac8" opacity="0.4"/><rect x="16" y="169" width="31" height="1.3" fill="#8a9ac8" opacity="0.4"/><rect x="16" y="174" width="38" height="1.3" fill="#8a9ac8" opacity="0.4"/><polygon points="238,24 346,36 342,112 236,106" fill="#7088b0"/><polygon points="244,30 340,40 336,106 242,100" fill="#96a8c6"/><rect x="300" y="50" width="30" height="30" fill="#c4b4b8" opacity="0.5"/><ellipse cx="245" cy="64" rx="12" ry="17" fill="#1c1716"/><path d="M222 84 Q240 78 262 86 L276 193 L214 193 L206 120z" fill="#121626"/><path d="M238 84 L256 82 L250 92z" fill="#c8c8d0"/><path d="M248 30 Q262 16 290 18 Q306 26 304 50 L296 80 L276 84 L256 64z" fill="#3a3430"/><path d="M252 52 Q272 46 288 56 L292 84 L274 92 Q258 80 252 52z" fill="#8c8492"/><path d="M266 90 Q292 80 326 92 L336 193 L258 193 L250 130z" fill="#181e3a"/><path d="M290 92 L322 102 L314 170 L280 150z" fill="#2a3866" opacity="0.8"/><path d="M284 86 L300 82 L294 100z" fill="#c8c8d8"/><ellipse cx="240" cy="150" rx="14" ry="8" fill="#6e6474"/><rect x="212" y="146" width="22" height="10" fill="#16161c"/><polygon points="10,186 190,120 190,124 10,190" fill="#2a3450"/></g><rect x="0" y="0" width="357" height="6" fill="#dcdcdc"/><rect x="0" y="193" width="357" height="6" fill="#dcdcdc"/></svg></div>
<div class="a" style="left:1401px;top:405px;width:53px;height:26.5px;background:rgba(45,45,45,.82);"></div>
<div class="t" style="left:1408.50px;top:409.34px;font-size:15.2px;font-weight:normal;color:#fff;letter-spacing:-0.35px;">02:51</div>
<svg class="a" style="left:1112px;top:250px;" width="16" height="17" viewBox="0 0 16 17" ><path d="M1.8 1.2L14.5 8.5 1.8 15.8z" fill="#f4f4f4" stroke="#f4f4f4" stroke-width="1.6" stroke-linejoin="round" opacity="1"/></svg>
<div class="t" style="left:1115.40px;top:456.81px;font-size:19px;font-weight:bold;color:#5f6368;letter-spacing:-0.06px;">VIDIZMO Digital Evidence Man...</div>
<svg class="a" style="left:1438px;top:457px;" width="6" height="19" viewBox="0 0 6 19" ><circle cx="3" cy="3.0" r="2.4" fill="#666"/><circle cx="3" cy="9.5" r="2.4" fill="#666"/><circle cx="3" cy="16.0" r="2.4" fill="#666"/></svg>
<div class="t" style="left:1115.20px;top:489.03px;font-size:15px;font-weight:normal;color:#63676b;">21 minutes ago</div>
<div class="a" style="left:1226.3px;top:492px;width:1.1px;height:13px;background:#707070;"></div>
<div class="t" style="left:1236.20px;top:489.03px;font-size:15px;font-weight:normal;color:#63676b;">0 Views</div>
<div class="a" style="left:1115px;top:529px;width:22.5px;height:17px;background:#636669;border-radius:2px;"></div>
<div class="t" style="left:1118.80px;top:532.37px;font-size:10.2px;font-weight:bold;color:#fff;letter-spacing:-0.1px;">CC</div>
<div class="a" style="left:1497px;top:239px;width:356px;height:355px;background:#fff;border-radius:0 0 5px 5px;box-shadow:0 1px 7px rgba(0,0,0,.15);"></div>
<div class="a" style="left:1497px;top:239px;width:356px;height:199px;overflow:hidden;"><svg width="356" height="199" viewBox="0 0 356 199" style="display:block"><defs><filter id="f4" x="-10%" y="-10%" width="120%" height="120%"><feGaussianBlur stdDeviation="0.5"/></filter></defs><rect width="356" height="199" fill="#555"/><g filter="url(#f4)"><defs><radialGradient id="bg4" cx="0.5" cy="0.55" r="0.7"><stop offset="0" stop-color="#3a3a3a"/><stop offset="1" stop-color="#1e1e1e"/></radialGradient><linearGradient id="base4" x1="0" y1="0" x2="1" y2="0"><stop offset="0" stop-color="#555"/><stop offset="0.3" stop-color="#8a8a8a"/><stop offset="0.7" stop-color="#8a8a8a"/><stop offset="1" stop-color="#555"/></linearGradient></defs><rect x="-10" y="-10" width="376" height="219" fill="url(#bg4)"/><rect x="46" y="11" width="262" height="168" rx="6" fill="#111"/><polygon points="226,11 302,11 308,18 308,22 226,22" fill="#6a6a6a"/><rect x="50" y="19" width="254" height="156" fill="#f8f8f8"/><rect x="50" y="19" width="254" height="6" fill="#2a2a2a"/><rect x="147" y="20" width="60" height="4.5" fill="#e06030"/><rect x="51" y="20" width="4" height="4" fill="#e06030"/><rect x="53" y="29.0" width="14" height="1.2" fill="#b0b0b0"/><rect x="53" y="33.8" width="19" height="1.2" fill="#b0b0b0"/><rect x="53" y="38.6" width="14" height="1.2" fill="#b0b0b0"/><rect x="53" y="43.4" width="19" height="1.2" fill="#b0b0b0"/><rect x="53" y="48.2" width="14" height="1.2" fill="#b0b0b0"/><rect x="53" y="53.0" width="19" height="1.2" fill="#b0b0b0"/><rect x="53" y="57.8" width="14" height="1.2" fill="#b0b0b0"/><rect x="53" y="62.6" width="19" height="1.2" fill="#b0b0b0"/><rect x="53" y="67.4" width="14" height="1.2" fill="#b0b0b0"/><rect x="53" y="72.2" width="19" height="1.2" fill="#b0b0b0"/><rect x="92" y="42" width="31.5" height="17.5" fill="#6a5058"/><rect x="92" y="61.5" width="20" height="1.3" fill="#aaa"/><rect x="127.5" y="42" width="31.5" height="17.5" fill="#4a4a4a"/><rect x="127.5" y="61.5" width="20" height="1.3" fill="#aaa"/><rect x="162.5" y="42" width="31.5" height="17.5" fill="#3a3a3c"/><rect x="162.5" y="61.5" width="20" height="1.3" fill="#aaa"/><rect x="198" y="42" width="31.5" height="17.5" fill="#58585c"/><rect x="198" y="61.5" width="20" height="1.3" fill="#aaa"/><rect x="233.5" y="42" width="31.5" height="17.5" fill="#d4ccc0"/><rect x="233.5" y="61.5" width="20" height="1.3" fill="#aaa"/><rect x="269" y="42" width="31.5" height="17.5" fill="#3e5668"/><rect x="269" y="61.5" width="20" height="1.3" fill="#aaa"/><rect x="92" y="79" width="31.5" height="17.5" fill="#5e5e62"/><rect x="92" y="98.5" width="20" height="1.3" fill="#aaa"/><rect x="127.5" y="79" width="31.5" height="17.5" fill="#0e0e0e"/><rect x="127.5" y="98.5" width="20" height="1.3" fill="#aaa"/><rect x="162.5" y="79" width="31.5" height="17.5" fill="#8a7c7a"/><rect x="162.5" y="98.5" width="20" height="1.3" fill="#aaa"/><rect x="198" y="79" width="31.5" height="17.5" fill="#66665e"/><rect x="198" y="98.5" width="20" height="1.3" fill="#aaa"/><rect x="233.5" y="79" width="31.5" height="17.5" fill="#8a8294"/><rect x="233.5" y="98.5" width="20" height="1.3" fill="#aaa"/><rect x="269" y="79" width="31.5" height="17.5" fill="#3a6a9a"/><rect x="269" y="98.5" width="20" height="1.3" fill="#aaa"/><rect x="92" y="116" width="31.5" height="17.5" fill="#a03444"/><rect x="92" y="135.5" width="20" height="1.3" fill="#aaa"/><rect x="127.5" y="116" width="31.5" height="17.5" fill="#2c7aa2"/><rect x="127.5" y="135.5" width="20" height="1.3" fill="#aaa"/><rect x="162.5" y="116" width="31.5" height="17.5" fill="#cacaca"/><rect x="162.5" y="135.5" width="20" height="1.3" fill="#aaa"/><rect x="198" y="116" width="31.5" height="17.5" fill="#5c4a40"/><rect x="198" y="135.5" width="20" height="1.3" fill="#aaa"/><rect x="233.5" y="116" width="31.5" height="17.5" fill="#5c4a40"/><rect x="233.5" y="135.5" width="20" height="1.3" fill="#aaa"/><rect x="269" y="116" width="31.5" height="17.5" fill="#5c4a40"/><rect x="269" y="135.5" width="20" height="1.3" fill="#aaa"/><rect x="92" y="153" width="31.5" height="17.5" fill="#6a6a6c"/><rect x="127.5" y="153" width="31.5" height="17.5" fill="#5a2a30"/><rect x="162.5" y="153" width="31.5" height="17.5" fill="#3c3834"/><rect x="198" y="153" width="31.5" height="17.5" fill="#3c3834"/><rect x="233.5" y="153" width="31.5" height="17.5" fill="#7a7a7c"/><rect x="269" y="153" width="31.5" height="17.5" fill="#9cb8d0"/><rect x="16" y="184" width="324" height="6.5" rx="2" fill="url(#base4)"/><rect x="153" y="185.5" width="46" height="2.5" fill="#5a5a5a"/><rect x="16" y="193" width="324" height="6" fill="#2e2e2e"/></g></svg></div>
<div class="a" style="left:1794px;top:405px;width:53px;height:26.5px;background:rgba(45,45,45,.82);"></div>
<div class="t" style="left:1801.50px;top:409.34px;font-size:15.2px;font-weight:normal;color:#fff;letter-spacing:-0.35px;">03:33</div>
<svg class="a" style="left:1506px;top:250px;" width="16" height="17" viewBox="0 0 16 17" ><path d="M1.8 1.2L14.5 8.5 1.8 15.8z" fill="#f4f4f4" stroke="#f4f4f4" stroke-width="1.6" stroke-linejoin="round" opacity="1"/></svg>
<div class="t" style="left:1509.40px;top:456.81px;font-size:19px;font-weight:bold;color:#5f6368;letter-spacing:-0.2px;">Understanding Evidence Settin...</div>
<svg class="a" style="left:1831px;top:457px;" width="6" height="19" viewBox="0 0 6 19" ><circle cx="3" cy="3.0" r="2.4" fill="#666"/><circle cx="3" cy="9.5" r="2.4" fill="#666"/><circle cx="3" cy="16.0" r="2.4" fill="#666"/></svg>
<div class="t" style="left:1509.20px;top:489.03px;font-size:15px;font-weight:normal;color:#63676b;">21 minutes ago</div>
<div class="a" style="left:1620.3px;top:492px;width:1.1px;height:13px;background:#707070;"></div>
<div class="t" style="left:1630.20px;top:489.03px;font-size:15px;font-weight:normal;color:#63676b;">0 Views</div>
<div class="a" style="left:1509px;top:529px;width:22.5px;height:17px;background:#636669;border-radius:2px;"></div>
<div class="t" style="left:1512.80px;top:532.37px;font-size:10.2px;font-weight:bold;color:#fff;letter-spacing:-0.1px;">CC</div>
<div class="a" style="left:641px;top:245px;width:25px;height:25px;background:#f26222;border-radius:50%;"></div>
<svg class="a" style="left:641px;top:245px;" width="25" height="25" viewBox="0 0 25 25" ><polyline points="6.3,12.8 10.6,17 18.8,8.6" fill="none" stroke="#fff" stroke-width="2.4" stroke-linecap="round" stroke-linejoin="round"/></svg>
<div class="a" style="left:579px;top:444px;width:40px;height:40px;background:#f26222;border-radius:50%;"></div>
<svg class="a" style="left:590px;top:453px;" width="14" height="23" viewBox="0 0 14 23" ><path d="M9.3 0.9H12.4V22.2H9.3V4.6L3.6 6.7V3.8z" fill="#fff"/></svg>
<div class="a" style="left:630px;top:449px;width:42px;height:39px;border:2px solid #f26222;box-sizing:border-box;"></div>
<div class="a" style="left:428px;top:488.5px;width:244px;height:313px;background:#fff;border:1px solid #d5d8dc;box-sizing:border-box;border-radius:0 0 4px 4px;box-shadow:0 2px 6px rgba(0,0,0,.18);overflow:hidden;"><div class="a" style="left:231px;top:0px;width:13px;height:313px;background:#fafafa;"></div>
<div class="t" style="left:54.40px;top:-10.85px;font-size:15.3px;font-weight:normal;color:#63676b;letter-spacing:-0.5px;">Move</div>
<div class="t" style="left:54.10px;top:32.95px;font-size:15.3px;font-weight:normal;color:#63676b;letter-spacing:-0.5px;">Copy Link</div>
<div class="t" style="left:54.10px;top:76.55px;font-size:15.3px;font-weight:normal;color:#63676b;letter-spacing:-0.5px;">Download</div>
<div class="t" style="left:54.10px;top:120.55px;font-size:15.3px;font-weight:normal;color:#63676b;letter-spacing:-0.5px;">Re-upload</div>
<div class="t" style="left:54.30px;top:163.55px;font-size:15.3px;font-weight:normal;color:#63676b;letter-spacing:-0.5px;">Media Info</div>
<div class="t" style="left:51.60px;top:207.65px;font-size:15.3px;font-weight:normal;color:#63676b;letter-spacing:-0.5px;">Copy</div>
<div class="t" style="left:54.30px;top:252.05px;font-size:15.3px;font-weight:normal;color:#63676b;letter-spacing:-0.5px;">Change Tier</div>
<div class="t" style="left:54.30px;top:295.75px;font-size:15.3px;font-weight:normal;color:#63676b;letter-spacing:-0.5px;">Lock</div>
<svg class="a" style="left:23px;top:-8.5px;" width="16" height="16" viewBox="0 0 16 16" ><rect x="6.8" y="0" width="2.4" height="12" fill="#5f6368"/><path d="M3.8 10h8.4L8 15z" fill="#5f6368" stroke="#5f6368" stroke-width="0.8" stroke-linejoin="round"/><rect x="1" y="8.6" width="2.6" height="1.8" fill="#5f6368"/><rect x="12.4" y="8.6" width="2.6" height="1.8" fill="#5f6368"/></svg>
<svg class="a" style="left:22px;top:32.5px;" width="21" height="18" viewBox="0 0 21 18" ><g transform="rotate(-42 10.5 9)" fill="none" stroke="#5f6368" stroke-width="1.8" stroke-linecap="round"><path d="M9.5 10.2H4.5A3.1 3.1 0 0 1 4.5 4H9.5A3.1 3.1 0 0 1 12.6 7.1"/><path d="M10.9 11.4H15.9A3.1 3.1 0 0 1 15.9 17.6H10.9A3.1 3.1 0 0 1 7.8 14.5" transform="translate(-0.8 -3.8)"/></g></svg>
<svg class="a" style="left:23px;top:78.5px;" width="17" height="15" viewBox="0 0 17 15" ><path d="M8.2 0.8v8.2M4.8 5.6l3.4 3.4 3.4-3.4" fill="none" stroke="#5f6368" stroke-width="2" stroke-linecap="round" stroke-linejoin="round"/><path d="M0.8 10.6h4.4l1.3 1.2h4l1.3-1.2h4.4v3a1.2 1.2 0 0 1-1.2 1.2H2a1.2 1.2 0 0 1-1.2-1.2z" fill="#5f6368"/><circle cx="13.2" cy="12.9" r=".75" fill="#fff"/></svg>
<svg class="a" style="left:23px;top:122.8px;" width="17" height="15" viewBox="0 0 17 15" ><path d="M8.2 9V0.8M4.8 4.2l3.4-3.4 3.4 3.4" fill="none" stroke="#5f6368" stroke-width="2" stroke-linecap="round" stroke-linejoin="round"/><path d="M0.8 10.6h4.4l1.3 1.2h4l1.3-1.2h4.4v3a1.2 1.2 0 0 1-1.2 1.2H2a1.2 1.2 0 0 1-1.2-1.2z" fill="#5f6368"/><circle cx="13.2" cy="12.9" r=".75" fill="#fff"/></svg>
<svg class="a" style="left:21.2px;top:165.5px;" width="9" height="16" viewBox="0 0 9 16" ><circle cx="4" cy="2.6" r="1.6" fill="#5f6368"/><path d="M1.5 6.2h3.8v7.4h1.6v1.4H1.3v-1.4h1.6V7.6H1.5z" fill="#5f6368"/></svg>
<svg class="a" style="left:22px;top:208.8px;" width="15" height="16" viewBox="0 0 15 16" ><path d="M4.5 1h5.5l3.5 3.5V11a1 1 0 0 1-1 1h-8a1 1 0 0 1-1-1V2a1 1 0 0 1 1-1z" fill="#5f6368"/><path d="M1.8 4.5v9.5a.8.8 0 0 0 .8.8H9" fill="none" stroke="#5f6368" stroke-width="1.8"/></svg>
<svg class="a" style="left:22.5px;top:253.0px;" width="16" height="15" viewBox="0 0 16 15" ><rect x="0.5" y="0.8" width="15" height="3.2" rx=".6" fill="#5f6368"/><path d="M1.5 4.8h13v8.2a1 1 0 0 1-1 1h-11a1 1 0 0 1-1-1z" fill="#5f6368"/><rect x="5.5" y="6.4" width="5" height="1.3" rx=".5" fill="#fff"/></svg>
<svg class="a" style="left:22.2px;top:296.5px;" width="15" height="18" viewBox="0 0 15 18" ><path d="M3.8 8V5.5a3.7 3.7 0 0 1 7.4 0V8" fill="none" stroke="#5f6368" stroke-width="2"/><rect x="0.8" y="7.5" width="13.4" height="10" rx="1.5" fill="#5f6368"/></svg>
<svg class="a" style="left:233px;top:7.0px;" width="9" height="7" viewBox="0 0 9 7" ><path d="M4.5 .5L8.7 6.5H.3z" fill="#8f8f8f"/></svg>
<svg class="a" style="left:233.3px;top:300.5px;" width="9" height="7" viewBox="0 0 9 7" ><path d="M.3 .5h8.4L4.5 6.5z" fill="#8f8f8f"/></svg>
<div class="a" style="left:234.20000000000005px;top:141.5px;width:7px;height:102.5px;background:#8a8a8a;border-radius:3.5px;"></div>
</div>
<div class="a" style="left:384px;top:553px;width:40px;height:40px;background:#f26222;border-radius:50%;"></div>
<div class="t" style="left:394.90px;top:557.15px;font-size:30px;font-weight:normal;color:#fff;">2</div>
<div class="a" style="left:438px;top:552.4px;width:126px;height:44.5px;border:2px solid #f26222;box-sizing:border-box;"></div>
</body></html>
